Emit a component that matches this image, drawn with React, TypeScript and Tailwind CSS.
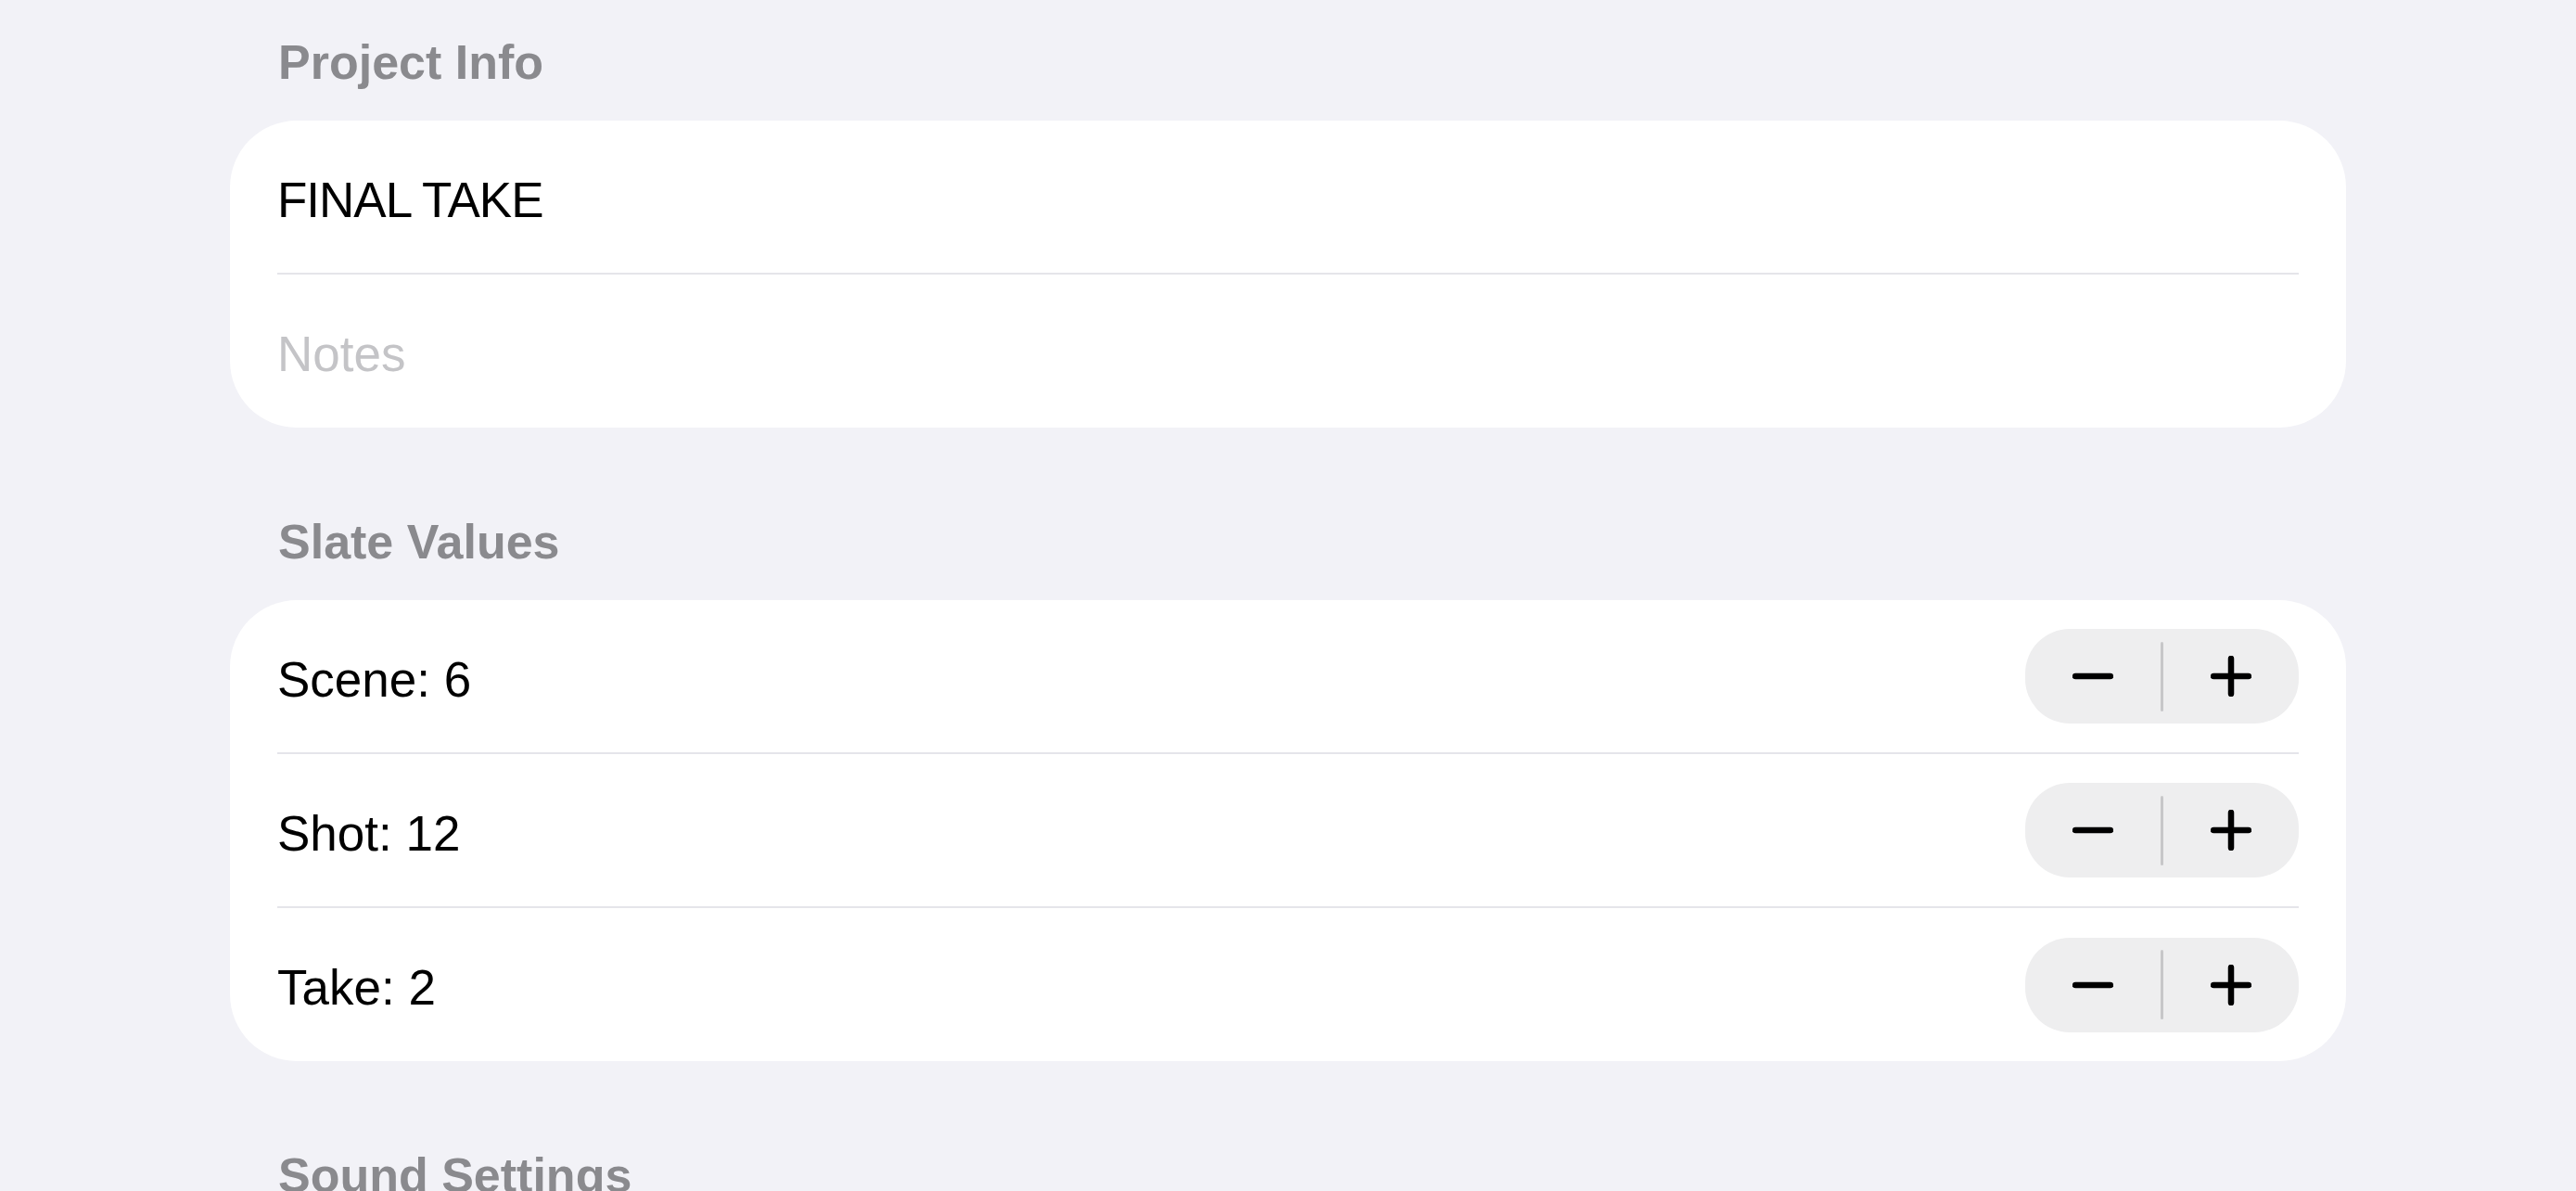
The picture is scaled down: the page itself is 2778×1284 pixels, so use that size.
import React from "react";

const font = { fontFamily: '"Liberation Sans", Arial, sans-serif' };

function Minus() {
  return (
    <svg width="44" height="44" viewBox="0 0 44 44" fill="none">
      <line x1="3" y1="22" x2="41" y2="22" stroke="#000" strokeWidth="6.5" strokeLinecap="round" />
    </svg>
  );
}

function Plus() {
  return (
    <svg width="44" height="44" viewBox="0 0 44 44" fill="none">
      <line x1="3" y1="22" x2="41" y2="22" stroke="#000" strokeWidth="6.5" strokeLinecap="round" />
      <line x1="22" y1="3" x2="22" y2="41" stroke="#000" strokeWidth="6.5" strokeLinecap="round" />
    </svg>
  );
}

function Stepper() {
  return (
    <div className="flex h-[102px] w-[295px] items-center rounded-[48px] bg-[#eeeeef]">
      <div className="flex flex-1 items-center justify-center">
        <Minus />
      </div>
      <div className="h-[75px] w-[3px] rounded-full bg-[#c7c7c9]" />
      <div className="flex flex-1 items-center justify-center">
        <Plus />
      </div>
    </div>
  );
}

function Header({ children, first }: { children: React.ReactNode; first?: boolean }) {
  return (
    <div
      className={`${first ? "mt-[40px]" : "mt-[97px]"} mb-[37px] pl-[52px] text-[52px] font-bold leading-[52px] text-[#8a8a8e]`}
    >
      {children}
    </div>
  );
}

function Sep() {
  return <div className="h-[2px] bg-[#e5e5ea]" />;
}

function Row({ label, height, muted, tight, stepper }: { label: string; height: number; muted?: boolean; tight?: boolean; stepper?: boolean }) {
  return (
    <div className={`flex items-center justify-between ${height === 164 ? "h-[164px]" : "h-[165px]"}`}>
      <span
        className={`pt-[6px] text-[53px] leading-[53px] ${muted ? "text-[#c4c4c7]" : "text-black"} ${tight ? "tracking-[-1px]" : ""}`}
      >
        {label}
      </span>
      {stepper ? <Stepper /> : null}
    </div>
  );
}

export default function App() {
  return (
    <div className="h-[1284px] w-[2778px] overflow-hidden bg-[#f2f2f7]" style={font}>
      <div className="px-[248px] pt-[1px]">
        <Header first>Project Info</Header>
        <div className="rounded-[72px] bg-white px-[51px]">
          <Row label="FINAL TAKE" height={164} tight />
          <Sep />
          <Row label="Notes" height={165} muted />
        </div>

        <Header>Slate Values</Header>
        <div className="rounded-[72px] bg-white px-[51px]">
          <Row label="Scene: 6" height={164} stepper />
          <Sep />
          <Row label="Shot: 12" height={164} stepper />
          <Sep />
          <Row label="Take: 2" height={165} stepper />
        </div>

        <Header>Sound Settings</Header>
      </div>
    </div>
  );
}
